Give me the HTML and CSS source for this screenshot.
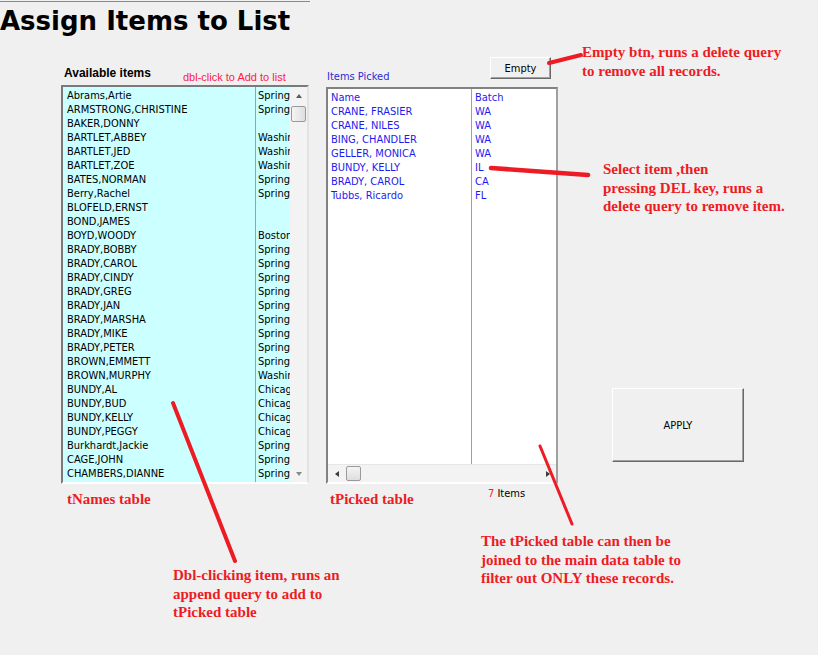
FILE: index.html
```html
<!DOCTYPE html>
<html>
<head>
<meta charset="utf-8">
<title>Assign Items to List</title>
<link rel="stylesheet" href="styles.css">
</head>
<body>
<div class="page">
  <div class="topline"></div>
  <h1 class="title">Assign Items to List</h1>

  <div class="form">
    <section class="panel names">
      <div class="names-head">
        <span class="lbl-bold">Available items</span>
        <span class="hint">dbl-click to Add to list</span>
      </div>
      <div class="listbox sunken cyan">
        <div class="rows names-rows">
          <div class="row"><span class="c1">Abrams,Artie</span><span class="c2">Springfield</span></div>
          <div class="row"><span class="c1">ARMSTRONG,CHRISTINE</span><span class="c2">Springfield</span></div>
          <div class="row"><span class="c1">BAKER,DONNY</span><span class="c2"></span></div>
          <div class="row"><span class="c1">BARTLET,ABBEY</span><span class="c2">Washington</span></div>
          <div class="row"><span class="c1">BARTLET,JED</span><span class="c2">Washington</span></div>
          <div class="row"><span class="c1">BARTLET,ZOE</span><span class="c2">Washington</span></div>
          <div class="row"><span class="c1">BATES,NORMAN</span><span class="c2">Springfield</span></div>
          <div class="row"><span class="c1">Berry,Rachel</span><span class="c2">Springfield</span></div>
          <div class="row"><span class="c1">BLOFELD,ERNST</span><span class="c2"></span></div>
          <div class="row"><span class="c1">BOND,JAMES</span><span class="c2"></span></div>
          <div class="row"><span class="c1">BOYD,WOODY</span><span class="c2">Boston</span></div>
          <div class="row"><span class="c1">BRADY,BOBBY</span><span class="c2">Springfield</span></div>
          <div class="row"><span class="c1">BRADY,CAROL</span><span class="c2">Springfield</span></div>
          <div class="row"><span class="c1">BRADY,CINDY</span><span class="c2">Springfield</span></div>
          <div class="row"><span class="c1">BRADY,GREG</span><span class="c2">Springfield</span></div>
          <div class="row"><span class="c1">BRADY,JAN</span><span class="c2">Springfield</span></div>
          <div class="row"><span class="c1">BRADY,MARSHA</span><span class="c2">Springfield</span></div>
          <div class="row"><span class="c1">BRADY,MIKE</span><span class="c2">Springfield</span></div>
          <div class="row"><span class="c1">BRADY,PETER</span><span class="c2">Springfield</span></div>
          <div class="row"><span class="c1">BROWN,EMMETT</span><span class="c2">Springfield</span></div>
          <div class="row"><span class="c1">BROWN,MURPHY</span><span class="c2">Washington</span></div>
          <div class="row"><span class="c1">BUNDY,AL</span><span class="c2">Chicago</span></div>
          <div class="row"><span class="c1">BUNDY,BUD</span><span class="c2">Chicago</span></div>
          <div class="row"><span class="c1">BUNDY,KELLY</span><span class="c2">Chicago</span></div>
          <div class="row"><span class="c1">BUNDY,PEGGY</span><span class="c2">Chicago</span></div>
          <div class="row"><span class="c1">Burkhardt,Jackie</span><span class="c2">Springfield</span></div>
          <div class="row"><span class="c1">CAGE,JOHN</span><span class="c2">Springfield</span></div>
          <div class="row"><span class="c1">CHAMBERS,DIANNE</span><span class="c2">Springfield</span></div>
        </div>
        <div class="vscroll">
          <span class="arr arr-up"></span>
          <span class="thumb thumb-v"></span>
          <span class="vspace"></span>
          <span class="arr arr-down"></span>
        </div>
      </div>
      <div class="caption names-cap">tNames table</div>
    </section>

    <section class="panel picked">
      <div class="picked-head">
        <span class="lbl-blue">Items Picked</span>
        <button class="btn btn-empty">Empty</button>
      </div>
      <div class="listbox sunken white">
        <div class="rows picked-rows">
          <div class="prow"><span class="p1">Name</span><span class="p2">Batch</span></div>
          <div class="prow"><span class="p1">CRANE, FRASIER</span><span class="p2">WA</span></div>
          <div class="prow"><span class="p1">CRANE, NILES</span><span class="p2">WA</span></div>
          <div class="prow"><span class="p1">BING, CHANDLER</span><span class="p2">WA</span></div>
          <div class="prow"><span class="p1">GELLER, MONICA</span><span class="p2">WA</span></div>
          <div class="prow"><span class="p1">BUNDY, KELLY</span><span class="p2">IL</span></div>
          <div class="prow"><span class="p1">BRADY, CAROL</span><span class="p2">CA</span></div>
          <div class="prow"><span class="p1">Tubbs, Ricardo</span><span class="p2">FL</span></div>
        </div>
        <div class="hscroll">
          <span class="arr arr-left"></span>
          <span class="thumb thumb-h"></span>
          <span class="hspace"></span>
          <span class="arr arr-right"></span>
        </div>
      </div>
      <div class="picked-foot">
        <span class="caption picked-cap">tPicked table</span>
        <span class="count"><span class="num">7</span> Items</span>
      </div>
    </section>

    <div class="apply-col">
      <button class="btn btn-apply">APPLY</button>
    </div>
  </div>

  <svg class="marks" width="818" height="655" viewBox="0 0 818 655">
    <line x1="549" y1="63" x2="581" y2="55" class="mk"/>
    <line x1="491" y1="168" x2="588" y2="175" class="mk thick"/>
    <line x1="173" y1="403" x2="235" y2="561" class="mk"/>
    <line x1="540" y1="446" x2="572" y2="524" class="mk thin"/>
  </svg>

  <div class="note n-empty">Empty btn, runs a delete query<br>to remove all records.</div>
  <div class="note n-del">Select item ,then<br>pressing DEL key, runs a<br>delete query to remove item.</div>
  <div class="note n-dbl">Dbl-clicking item, runs an<br>append query to add to<br>tPicked table</div>
  <div class="note n-join">The tPicked table can then be<br>joined to the main data table to<br>filter out ONLY these records.</div>
</div>
</body>
</html>
```

FILE: styles.css
```css
html, body {
  margin: 0;
  padding: 0;
  background: #f0f0f0;
}

.page {
  position: relative;
  width: 818px;
  height: 655px;
  overflow: hidden;
  background: #f0f0f0;
  font-family: "DejaVu Sans Condensed", "DejaVu Sans", sans-serif;
  font-stretch: condensed;
  font-size: 11px;
  color: #000;
}

.topline {
  width: 310px;
  height: 1px;
  margin-top: 1px;
  background: #8a8a8a;
}

.title {
  margin: 0;
  padding: 4px 0 0 0;
  font-family: "DejaVu Sans", sans-serif;
  font-stretch: normal;
  font-weight: bold;
  font-size: 26px;
  line-height: 30px;
  color: #000;
}

.form {
  display: flex;
  align-items: flex-start;
  padding-left: 61px;
}

/* ---------- names panel ---------- */
.names {
  width: 248px;
}

.names-head {
  display: grid;
  grid-template-columns: 122px 1fr;
  align-items: end;
  height: 49px;
}

.lbl-bold {
  padding-left: 3px;
  margin-bottom: 5px;
  font-family: "Liberation Sans", Arial, sans-serif;
  font-stretch: normal;
  font-weight: bold;
  font-size: 12px;
  line-height: 14px;
  white-space: nowrap;
}

.hint {
  margin-bottom: 1px;
  font-family: "Liberation Sans", Arial, sans-serif;
  font-stretch: normal;
  font-size: 11px;
  line-height: 14px;
  color: #ff1a44;
  white-space: nowrap;
}

.listbox {
  box-sizing: border-box;
  display: flex;
  border-style: solid;
  border-width: 2px;
  border-color: #7a7a7a #e3e3e3 #ffffff #7a7a7a;
}

.cyan {
  height: 399px;
  background: #ccffff;
}

.rows {
  flex: 1;
  overflow: hidden;
  padding-top: 2px;
}

.names-rows {
  background: linear-gradient(to right, transparent 192px, #a0a0a0 192px, #a0a0a0 193px, transparent 193px);
}

.row {
  display: flex;
  height: 14px;
  line-height: 14px;
  white-space: nowrap;
}

.c1 {
  box-sizing: border-box;
  width: 192px;
  flex: none;
  padding-left: 4px;
  overflow: hidden;
}

.c2 {
  flex: 1;
  min-width: 0;
  padding-left: 3px;
  overflow: hidden;
}

/* scrollbars */
.vscroll {
  width: 17px;
  flex: none;
  display: flex;
  flex-direction: column;
  background: #f3f3f3;
}

.arr {
  flex: none;
  width: 17px;
  height: 17px;
  display: flex;
  align-items: center;
  justify-content: center;
}

.arr::before {
  content: "";
  width: 0;
  height: 0;
  border: 0 solid transparent;
}

.arr-up::before {
  border-left-width: 3.5px;
  border-right-width: 3.5px;
  border-bottom: 4px solid #5c5c5c;
}

.arr-down::before {
  border-left-width: 3.5px;
  border-right-width: 3.5px;
  border-top: 4px solid #8a8a8a;
}

.arr-left::before {
  border-top-width: 3.5px;
  border-bottom-width: 3.5px;
  border-right: 4px solid #3c3c3c;
}

.arr-right::before {
  border-top-width: 3.5px;
  border-bottom-width: 3.5px;
  border-left: 4px solid #3c3c3c;
}

.thumb {
  box-sizing: border-box;
  flex: none;
  border: 1px solid #9a9a9a;
  border-radius: 2px;
}

.thumb-v {
  height: 16px;
  margin: 2px 1px 0 1px;
  background: linear-gradient(to right, #f4f4f4, #dedede);
}

.vspace, .hspace {
  flex: 1;
}

/* ---------- picked panel ---------- */
.picked {
  width: 232px;
  margin-left: 17px;
}

.picked-head {
  display: flex;
  align-items: flex-end;
  justify-content: space-between;
  height: 51px;
}

.lbl-blue {
  padding-left: 1px;
  margin-bottom: 3px;
  line-height: 14px;
  color: #2b2bd6;
}

.btn {
  box-sizing: border-box;
  padding: 0;
  margin: 0;
  font-family: "DejaVu Sans Condensed", "DejaVu Sans", sans-serif;
  font-stretch: condensed;
  font-size: 11px;
  color: #000;
  background: #f0f0f0;
  border: 1px solid;
  border-color: #ffffff #696969 #696969 #ffffff;
  box-shadow: inset -1px -1px 0 #a0a0a0;
  border-radius: 0;
}

.btn-empty {
  width: 61px;
  height: 22px;
  margin: 0 7px 8px 0;
}

.white {
  flex-direction: column;
  height: 397px;
  background: #ffffff;
  border-color: #828282 #a0a0a0 #ffffff #828282;
}

.picked-rows {
  background: linear-gradient(to right, transparent 143px, #a0a0a0 143px, #a0a0a0 144px, transparent 144px);
}

.prow {
  display: flex;
  height: 14px;
  line-height: 14px;
  white-space: nowrap;
  color: #1c1cf0;
}

.p1 {
  box-sizing: border-box;
  width: 143px;
  flex: none;
  padding-left: 3px;
}

.p2 {
  padding-left: 4px;
}

.hscroll {
  flex: none;
  height: 17px;
  display: flex;
  align-items: center;
  background: #f3f3f3;
  border-top: 1px solid #e6e6e6;
}

.thumb-h {
  width: 15px;
  height: 15px;
  margin-left: 1px;
  background: linear-gradient(to bottom, #f4f4f4, #dedede);
}

.picked-foot {
  display: grid;
  grid-template-columns: 162px auto;
  align-items: start;
}

.count {
  margin-top: 3px;
  line-height: 14px;
  white-space: nowrap;
}

.num {
  color: #ff1a1a;
}

/* captions & notes (red annotations) */
.caption, .note {
  font-family: "Liberation Serif", "Times New Roman", serif;
  font-stretch: normal;
  font-weight: bold;
  font-size: 15px;
  line-height: 18.5px;
  color: #ed1c24;
  white-space: nowrap;
}

.names-cap {
  margin-top: 6px;
  padding-left: 6px;
}

.picked-cap {
  margin-top: 6px;
  padding-left: 4px;
}

/* ---------- apply ---------- */
.apply-col {
  margin-left: 54px;
  margin-top: 352px;
}

.btn-apply {
  width: 132px;
  height: 74px;
}

/* ---------- overlay marks ---------- */
.marks {
  position: absolute;
  left: 0;
  top: 0;
  pointer-events: none;
}

.mk {
  stroke: #ed1c24;
  stroke-width: 4;
  stroke-linecap: round;
}

.mk.thick {
  stroke-width: 4.5;
}

.mk.thin {
  stroke-width: 3;
}

.note {
  position: absolute;
}

.n-empty { left: 582px; top: 43px; }
.n-del   { left: 603px; top: 160px; }
.n-dbl   { left: 173px; top: 566px; }
.n-join  { left: 481px; top: 532px; }
```
